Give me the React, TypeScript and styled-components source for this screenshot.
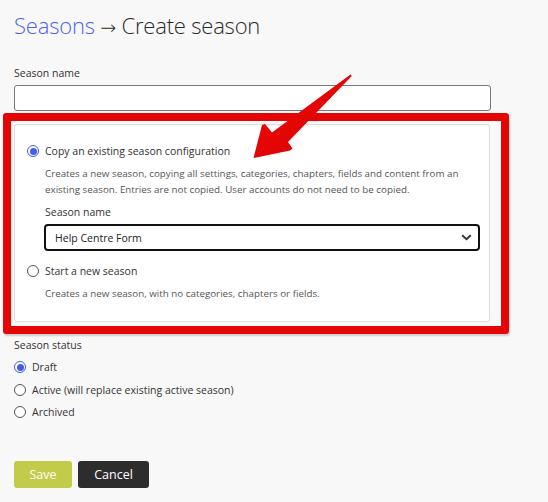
import styled, { createGlobalStyle } from "styled-components";

const GlobalStyle = createGlobalStyle`
  html, body {
    margin: 0;
    padding: 0;
    background: #f8f8f8;
  }
  body {
    font-family: "Open Sans", "Noto Sans", sans-serif;
    color: #333;
  }
`;

interface RadioProps {
  checked?: boolean;
}

function Radio({ checked }: RadioProps) {
  return (
    <RadioCircle checked={checked}>
      {checked && <RadioDot />}
    </RadioCircle>
  );
}

function Chevron() {
  return (
    <svg width="11" height="7" viewBox="0 0 11 7">
      <path d="M1.2 1.2 L5.5 5.3 L9.8 1.2" fill="none" stroke="#333" strokeWidth="1.9" />
    </svg>
  );
}

function PointerArrow() {
  return (
    <ArrowSvg width="110" height="96" viewBox="0 0 110 96">
      <defs>
        <linearGradient id="arrowShade" x1="0" y1="0" x2="1" y2="1">
          <stop offset="0" stopColor="#f00a0a" />
          <stop offset="1" stopColor="#d80000" />
        </linearGradient>
      </defs>
      <path
        d="M98.5 2.5 L99.8 4 L36 70 L40.5 76.5 L38 78.5 L1.5 86 L10 53 L13 52 L20 60.5 Z"
        fill="url(#arrowShade)"
      />
    </ArrowSvg>
  );
}

export default function App() {
  return (
    <Page>
      <GlobalStyle />
      <Title>
        <TitleLink>Seasons</TitleLink> <TitleArrow>→</TitleArrow> Create season
      </Title>

      <Field>
        <Label>Season name</Label>
        <TextInput />
      </Field>

      <Highlight>
        <Panel>
          <Option>
            <OptionHead>
              <Radio checked />
              <OptionTitle>Copy an existing season configuration</OptionTitle>
            </OptionHead>
            <OptionBody>
              <Help>
                Creates a new season, copying all settings, categories, chapters, fields and content from an
                existing season. Entries are not copied. User accounts do not need to be copied.
              </Help>
              <Label>Season name</Label>
              <Select>
                <span>Help Centre Form</span>
                <Chevron />
              </Select>
            </OptionBody>
          </Option>
          <Option>
            <OptionHead>
              <Radio />
              <OptionTitle>Start a new season</OptionTitle>
            </OptionHead>
            <OptionBody>
              <Help>Creates a new season, with no categories, chapters or fields.</Help>
            </OptionBody>
          </Option>
        </Panel>
        <PointerArrow />
      </Highlight>

      <StatusGroup>
        <Label>Season status</Label>
        <StatusRow>
          <Radio checked />
          <StatusText>Draft</StatusText>
        </StatusRow>
        <StatusRow>
          <Radio />
          <StatusText>Active (will replace existing active season)</StatusText>
        </StatusRow>
        <StatusRow>
          <Radio />
          <StatusText>Archived</StatusText>
        </StatusRow>
      </StatusGroup>

      <Actions>
        <Button variant="save">Save</Button>
        <Button variant="cancel">Cancel</Button>
      </Actions>
    </Page>
  );
}

const Page = styled.div`
  width: 477px;
  padding: 10px 0 14px 14px;
  display: flex;
  flex-direction: column;
`;

const Title = styled.h1`
  margin: 0;
  font-family: "Open Sans", sans-serif;
  font-weight: 300;
  font-size: 22px;
  line-height: 30px;
  color: #2b2b2b;
  letter-spacing: -0.2px;
`;

const TitleLink = styled.span`
  color: #4f62e8;
`;

const TitleArrow = styled.span`
  font-family: "DejaVu Sans", sans-serif;
  font-weight: 200;
  font-size: 19px;
  line-height: 0;
`;

const Field = styled.div`
  margin-top: 26px;
  display: flex;
  flex-direction: column;
`;

const Label = styled.div`
  font-size: 10.5px;
  line-height: 14px;
  color: #333;
  margin-bottom: 5px;
`;

const TextInput = styled.div`
  height: 24px;
  background: #fff;
  border: 1px solid #777;
  border-radius: 3px;
`;

const Highlight = styled.div`
  position: relative;
  margin: 1.5px 0 0 -11px;
  width: 476px;
  padding: 3.5px 11px 4px 3px;
  border: 8px solid #e60505;
  border-radius: 3px;
  box-shadow: 1px 2px 2px rgba(0, 0, 0, 0.18);
`;

const ArrowSvg = styled.svg`
  position: absolute;
  left: 241px;
  top: -49px;
`;

const Panel = styled.div`
  background: #fff;
  border: 1px solid #ddd;
  border-radius: 3px;
  padding: 18px 9px 19px 12px;
  display: flex;
  flex-direction: column;
  gap: 12px;
`;

const Option = styled.div`
  display: flex;
  flex-direction: column;
`;

const OptionHead = styled.div`
  display: flex;
  align-items: center;
  gap: 6px;
`;

const OptionTitle = styled.span`
  font-size: 10.5px;
  line-height: 16px;
  color: #333;
`;

const OptionBody = styled.div`
  padding-left: 17px;
  padding-top: 7px;
  display: flex;
  flex-direction: column;
`;

const Help = styled.p`
  margin: 0 0 8px 1px;
  font-size: 9.8px;
  line-height: 15.5px;
  color: #555;
  &:last-child {
    margin-bottom: 0;
  }
  & + ${Label} {
    margin-left: 1px;
  }
`;

const Select = styled.div`
  height: 27px;
  box-sizing: border-box;
  background: #fff;
  border: 2px solid #111;
  border-radius: 4px;
  padding: 0 6px 0 9px;
  display: flex;
  align-items: center;
  justify-content: space-between;
  font-size: 10.5px;
  color: #222;
`;

const RadioCircle = styled.span<RadioProps>`
  box-sizing: border-box;
  width: 12px;
  height: 12px;
  flex: none;
  border-radius: 50%;
  border: 1px solid ${({ checked }) => (checked ? "#4a5bd8" : "#555")};
  background: #fff;
  display: flex;
  align-items: center;
  justify-content: center;
`;

const RadioDot = styled.span`
  width: 7px;
  height: 7px;
  border-radius: 50%;
  background: #3f5ef0;
`;

const StatusGroup = styled.div`
  margin-top: 4px;
  display: flex;
  flex-direction: column;
  gap: 8.5px;
  & > ${Label} {
    margin-bottom: 0;
  }
`;

const StatusRow = styled.div`
  display: flex;
  align-items: center;
  gap: 6px;
`;

const StatusText = styled.span`
  font-size: 10.5px;
  line-height: 14px;
  color: #333;
`;

const Actions = styled.div`
  margin-top: 42px;
  display: flex;
  gap: 6px;
`;

const Button = styled.button<{ variant: "save" | "cancel" }>`
  height: 27px;
  padding: 0 14px;
  border: none;
  border-radius: 3px;
  font-family: "Open Sans", sans-serif;
  font-size: 12.5px;
  color: #fff;
  background: ${({ variant }) => (variant === "save" ? "#c3cb4b" : "#2d2d2d")};
  min-width: ${({ variant }) => (variant === "save" ? "58px" : "71px")};
`;
